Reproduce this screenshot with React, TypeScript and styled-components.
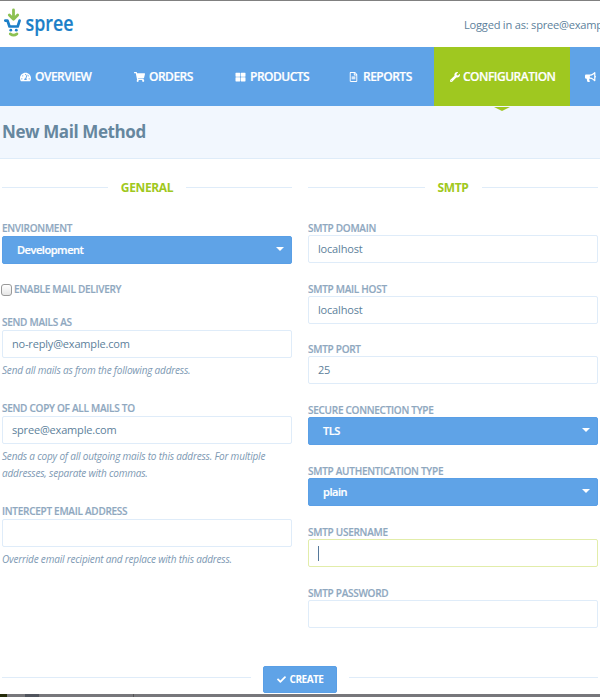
import React from "react";
import styled, { createGlobalStyle, css } from "styled-components";
import {
  FaTachometerAlt,
  FaShoppingCart,
  FaThLarge,
  FaRegFileAlt,
  FaWrench,
  FaBullhorn,
  FaCheck,
} from "react-icons/fa";

const blue = "#5fa3e7";
const green = "#9fc820";
const pale = "#dfecf9";
const slate = "#5d7f9b";
const muted = "#8fa8bf";

const GlobalStyle = createGlobalStyle`
  *, *::before, *::after { box-sizing: border-box; }
  html, body { margin: 0; padding: 0; background: #fff; overflow: hidden; }
  body { font-family: "Open Sans", "Noto Sans", sans-serif; color: ${slate}; }
`;

const Page = styled.div`
  width: 600px;
  height: 697px;
  overflow: hidden;
  display: flex;
  flex-direction: column;
  border-top: 1px solid #808080;
`;

const Header = styled.header`
  flex: none;
  height: 46px;
  display: flex;
  justify-content: space-between;
  align-items: flex-start;
  overflow: hidden;
`;

const Logo = styled.svg`
  display: block;
  width: 80px;
  height: 46px;
  overflow: visible;
`;

const Login = styled.div`
  flex: none;
  width: 136px;
  margin-top: 15px;
  font-size: 11.1px;
  line-height: 18px;
  letter-spacing: -0.22px;
  white-space: nowrap;
`;

const Nav = styled.nav`
  flex: none;
  height: 59px;
  display: flex;
  background: ${blue};
`;

const NavItem = styled.a<{ $width: number; $pad: number; $active?: boolean }>`
  position: relative;
  flex: none;
  width: ${(p) => p.$width}px;
  padding-left: ${(p) => p.$pad}px;
  display: flex;
  align-items: center;
  color: #fff;
  font-size: 12px;
  font-weight: 600;
  letter-spacing: -0.5px;
  -webkit-text-stroke: 0.2px #fff;
  white-space: nowrap;
  background: ${(p) => (p.$active ? green : "transparent")};
  svg {
    flex: none;
    width: 11px;
    height: 10px;
    margin: 1px 4px 0 0;
  }
  ${(p) =>
    p.$active &&
    css`
      svg { width: 10px; margin-right: 3px; }
      &::after {
        content: "";
        position: absolute;
        left: 60px;
        top: 60px;
        border: 8px solid transparent;
        border-top: 4px solid ${green};
        border-bottom: 0;
      }
    `}
`;

const TitleBar = styled.div`
  flex: none;
  height: 53px;
  padding: 0 2px 1px;
  display: flex;
  align-items: center;
  background: #f2f7fe;
  border-bottom: 1px solid ${pale};
`;

const Title = styled.h1`
  margin: 0;
  font-size: 17px;
  font-weight: 700;
  line-height: 24px;
  letter-spacing: -0.4px;
  color: #66879f;
`;

const Columns = styled.form`
  flex: none;
  height: 507px;
  padding: 19px 2px 0;
  display: grid;
  grid-template-columns: 290px 290px;
  column-gap: 16px;
`;

const Legend = styled.div`
  height: 20px;
  margin-bottom: 23px;
  display: flex;
  align-items: center;
  gap: 13px;
  color: ${green};
  font-size: 12px;
  font-weight: 700;
  letter-spacing: -0.35px;
  line-height: 20px;
  &::before,
  &::after {
    content: "";
    flex: 1;
    height: 1px;
    margin-bottom: 2px;
    background: ${pale};
  }
`;

const Label = styled.label`
  display: block;
  height: 15px;
  font-size: 10px;
  font-weight: 600;
  letter-spacing: -0.27px;
  -webkit-text-stroke: 0.15px ${muted};
  line-height: 15px;
  color: ${muted};
  white-space: nowrap;
`;

const Field = styled.div<{ $height: number }>`
  height: ${(p) => p.$height}px;
`;

const Column = styled.div<{ $compact?: boolean }>`
  ${Field} > ${Label} {
    height: ${(p) => (p.$compact ? 14 : 15)}px;
  }
`;

const Input = styled.div<{ $focused?: boolean }>`
  height: 28px;
  padding: 0 9px 2px;
  display: flex;
  align-items: center;
  border: 1px solid ${(p) => (p.$focused ? "#e2edaa" : pale)};
  border-radius: 2px;
  background: #fff;
  font-size: 11px;
  letter-spacing: -0.18px;
  color: ${slate};
`;

const Caret = styled.span`
  width: 1px;
  height: 15px;
  margin-top: 3px;
  background: #56799b;
`;

const Select = styled.div`
  height: 28px;
  padding: 0 7px 2px 14px;
  display: flex;
  align-items: center;
  justify-content: space-between;
  border: 1px solid #5a9fe6;
  border-radius: 2px;
  background: ${blue};
  color: #fff;
  font-size: 11px;
  font-weight: 600;
  letter-spacing: -0.45px;
  -webkit-text-stroke: 0.2px #fff;
  &::after {
    content: "";
    border: 4px solid transparent;
    border-top-color: #fff;
    border-bottom: 0;
  }
`;

const CheckRow = styled.div`
  height: 33px;
  margin-left: -1px;
  display: flex;
  align-items: flex-start;
  gap: 2px;
`;

const Box = styled.span`
  width: 11px;
  height: 12px;
  margin-top: 2px;
  border: 1px solid #999;
  border-radius: 3px;
  background: linear-gradient(#fff, #e6e6e6);
`;

const Hint = styled.p`
  margin: 4px 0 0;
  font-size: 10px;
  font-style: italic;
  letter-spacing: -0.19px;
  line-height: 17px;
  color: #7d99b3;
  white-space: nowrap;
`;

const Actions = styled.div`
  flex: none;
  height: 28px;
  padding: 0 2px;
  display: flex;
  align-items: flex-start;
  gap: 12px;
  &::before,
  &::after {
    content: "";
    flex: 1;
    height: 1px;
    margin-top: 11px;
    background: ${pale};
  }
`;

const Button = styled.button`
  width: 74px;
  height: 27px;
  padding: 0 0 1px;
  display: flex;
  align-items: center;
  justify-content: center;
  gap: 4px;
  border: 1px solid #5a9fe6;
  border-radius: 2px;
  background: ${blue};
  color: #fff;
  font: 700 10px "Open Sans", sans-serif;
  letter-spacing: -0.5px;
  svg {
    width: 9px;
    height: 9px;
  }
`;

const Footer = styled.div`
  flex: none;
  height: 3px;
  display: flex;
  background: #77777b;
  span:nth-child(1) { width: 7px; background: #242b08; }
  span:nth-child(2) { width: 14px; margin-left: 18px; background: #50545d; }
  span:nth-child(3) { width: 1px; margin-left: 94px; background: #555; }
`;

type FieldData = {
  label: string;
  kind: "input" | "select" | "focused";
  value?: string;
  hint?: string[];
  height: number;
};

function FormField({ label, kind, value, hint, height }: FieldData) {
  return (
    <Field $height={height}>
      <Label>{label}</Label>
      {kind === "select" ? (
        <Select>{value}</Select>
      ) : (
        <Input $focused={kind === "focused"}>
          {kind === "focused" ? <Caret /> : value}
        </Input>
      )}
      {hint && (
        <Hint>
          {hint.map((line) => (
            <React.Fragment key={line}>
              {line}
              <br />
            </React.Fragment>
          ))}
        </Hint>
      )}
    </Field>
  );
}

const mailFields: FieldData[] = [
  { label: "SEND MAILS AS", kind: "input", value: "no-reply@example.com", hint: ["Send all mails as from the following address."], height: 86 },
  { label: "SEND COPY OF ALL MAILS TO", kind: "input", value: "spree@example.com", hint: ["Sends a copy of all outgoing mails to this address. For multiple", "addresses, separate with commas."], height: 103 },
  { label: "INTERCEPT EMAIL ADDRESS", kind: "input", hint: ["Override email recipient and replace with this address."], height: 80 },
];

const smtpFields: FieldData[] = [
  { label: "SMTP DOMAIN", kind: "input", value: "localhost", height: 61 },
  { label: "SMTP MAIL HOST", kind: "input", value: "localhost", height: 60 },
  { label: "SMTP PORT", kind: "input", value: "25", height: 61 },
  { label: "SECURE CONNECTION TYPE", kind: "select", value: "TLS", height: 61 },
  { label: "SMTP AUTHENTICATION TYPE", kind: "select", value: "plain", height: 61 },
  { label: "SMTP USERNAME", kind: "focused", height: 61 },
  { label: "SMTP PASSWORD", kind: "input", height: 43 },
];

export default function App() {
  return (
    <>
      <GlobalStyle />
      <Page>
        <Header>
          <Logo viewBox="0 1 80 46" aria-label="spree">
            <g fill="none" strokeLinecap="round" strokeLinejoin="round">
              <path d="M13.5 10v8.5M9.3 15l4.2 4.2 4.2-4.2" stroke="#8cc152" strokeWidth="2.8" />
              <path d="M5.3 20.6h2.2l2 5.9h8.2l1.9-5.9" stroke="#1b7fc8" strokeWidth="2.7" />
              <path d="M10.2 33.9q3.4 2.6 6.8 0" stroke="#8cc152" strokeWidth="2.6" />
            </g>
            <circle cx="10.8" cy="30.2" r="1.4" fill="#1b7fc8" />
            <circle cx="16.3" cy="30.2" r="1.4" fill="#1b7fc8" />
            <text x="25.5" y="31" fill="#1b7fc8" stroke="#1b7fc8" strokeWidth="0.2" fontFamily="Open Sans" fontSize="21.5" fontWeight="600" textLength="48" lengthAdjust="spacingAndGlyphs">spree</text>
          </Logo>
          <Login>Logged in as: spree@example.com</Login>
        </Header>
        <Nav>
          <NavItem $width={113} $pad={20}><FaTachometerAlt />OVERVIEW</NavItem>
          <NavItem $width={102} $pad={21}><FaShoppingCart />ORDERS</NavItem>
          <NavItem $width={115} $pad={20}><FaThLarge />PRODUCTS</NavItem>
          <NavItem $width={104} $pad={18}><FaRegFileAlt />REPORTS</NavItem>
          <NavItem $width={136} $pad={16} $active><FaWrench />CONFIGURATION</NavItem>
          <NavItem $width={120} $pad={15}><FaBullhorn /></NavItem>
        </Nav>
        <TitleBar>
          <Title>New Mail Method</Title>
        </TitleBar>
        <Columns>
          <Column>
            <Legend>GENERAL</Legend>
            <FormField label="ENVIRONMENT" kind="select" value="Development" height={61} />
            <CheckRow>
              <Box />
              <Label>ENABLE MAIL DELIVERY</Label>
            </CheckRow>
            {mailFields.map((f) => <FormField key={f.label} {...f} />)}
          </Column>
          <Column $compact>
            <Legend>SMTP</Legend>
            {smtpFields.map((f) => <FormField key={f.label} {...f} />)}
          </Column>
        </Columns>
        <Actions>
          <Button type="button"><FaCheck />CREATE</Button>
        </Actions>
        <Footer><span /><span /><span /></Footer>
      </Page>
    </>
  );
}
